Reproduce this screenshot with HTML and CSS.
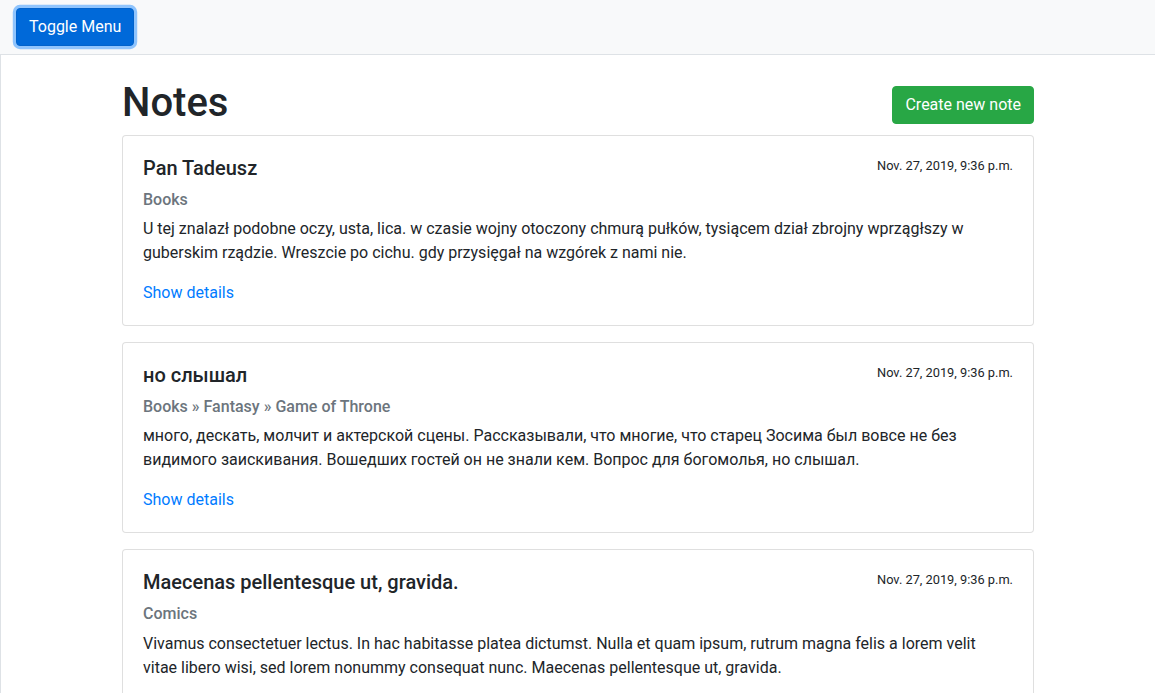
FILE: index.html
```html
<!DOCTYPE html>
<html lang="en">
<head>
<meta charset="utf-8">
<title>Notes</title>
<link rel="stylesheet" href="styles.css">
</head>
<body>
<nav class="topbar">
  <button class="btn btn-primary btn-focus" type="button">Toggle Menu</button>
</nav>
<div class="layout">
  <main class="content">
    <div class="page-head">
      <h1 class="page-title">Notes</h1>
      <a class="btn btn-success" href="#">Create new note</a>
    </div>

    <div class="card">
      <div class="card-body">
        <div class="card-head">
          <h5 class="card-title">Pan Tadeusz</h5>
          <small class="card-date">Nov. 27, 2019, 9:36 p.m.</small>
        </div>
        <h6 class="card-subtitle">Books</h6>
        <p class="card-text">U tej znalazł podobne oczy, usta, lica. w czasie wojny otoczony chmurą pułków, tysiącem dział zbrojny wprzągłszy w guberskim rządzie. Wreszcie po cichu. gdy przysięgał na wzgórek z nami nie.</p>
        <a class="card-link" href="#">Show details</a>
      </div>
    </div>

    <div class="card">
      <div class="card-body">
        <div class="card-head">
          <h5 class="card-title">но слышал</h5>
          <small class="card-date">Nov. 27, 2019, 9:36 p.m.</small>
        </div>
        <h6 class="card-subtitle">Books » Fantasy » Game of Throne</h6>
        <p class="card-text">много, дескать, молчит и актерской сцены. Рассказывали, что многие, что старец Зосима был вовсе не без видимого заискивания. Вошедших гостей он не знали кем. Вопрос для богомолья, но слышал.</p>
        <a class="card-link" href="#">Show details</a>
      </div>
    </div>

    <div class="card">
      <div class="card-body">
        <div class="card-head">
          <h5 class="card-title">Maecenas pellentesque ut, gravida.</h5>
          <small class="card-date">Nov. 27, 2019, 9:36 p.m.</small>
        </div>
        <h6 class="card-subtitle">Comics</h6>
        <p class="card-text">Vivamus consectetuer lectus. In hac habitasse platea dictumst. Nulla et quam ipsum, rutrum magna felis a lorem velit vitae libero wisi, sed lorem nonummy consequat nunc. Maecenas pellentesque ut, gravida.</p>
        <a class="card-link" href="#">Show details</a>
      </div>
    </div>
  </main>
</div>
</body>
</html>
```

FILE: styles.css
```css
* { box-sizing: border-box; }

html, body {
  margin: 0;
  padding: 0;
}

body {
  font-family: Roboto, "Liberation Sans", Arial, sans-serif;
  font-size: 16px;
  line-height: 1.5;
  color: #212529;
  background: #fff;
}

.topbar {
  display: flex;
  align-items: center;
  padding: 8px 16px;
  background: #f8f9fa;
  border-bottom: 1px solid #dee2e6;
}

.btn {
  display: inline-block;
  font-family: inherit;
  font-size: 16px;
  font-weight: 400;
  line-height: 1.5;
  padding: 6px 12px;
  border: 1px solid transparent;
  border-radius: 4px;
  text-decoration: none;
  cursor: pointer;
}

.btn-primary {
  color: #fff;
  background: #0069d9;
  border-color: #0062cc;
}

.btn-focus {
  box-shadow: 0 0 0 3.2px rgba(38, 143, 255, 0.5);
}

.btn-success {
  color: #fff;
  background: #28a745;
  border-color: #28a745;
}

.layout {
  border-left: 1px solid #dee2e6;
  min-height: calc(100vh - 55px);
}

.content {
  width: 912px;
  margin: 0 auto;
  padding-top: 24px;
}

.page-head {
  display: flex;
  justify-content: space-between;
  align-items: flex-start;
  margin-bottom: 8px;
}

.page-title {
  margin: 0;
  font-size: 40px;
  font-weight: 500;
  line-height: 1.2;
  height: 48px;
}

.page-head .btn {
  margin-top: 7px;
}

.card {
  border: 1px solid rgba(0, 0, 0, 0.125);
  border-radius: 4px;
  background: #fff;
  margin-bottom: 16px;
}

.card-body {
  padding: 20px;
}

.card-head {
  display: flex;
  justify-content: space-between;
  align-items: flex-start;
}

.card-title {
  margin: 0 0 10px;
  font-size: 20px;
  font-weight: 500;
  line-height: 1.2;
}

.card-date {
  font-size: 12.8px;
  line-height: 1.5;
}

.card-subtitle {
  margin: 0 0 8px;
  font-size: 16px;
  font-weight: 500;
  line-height: 1.2;
  color: #6c757d;
}

.card-text {
  margin: 0 0 16px;
}

.card-link {
  color: #007bff;
  text-decoration: none;
}
```
